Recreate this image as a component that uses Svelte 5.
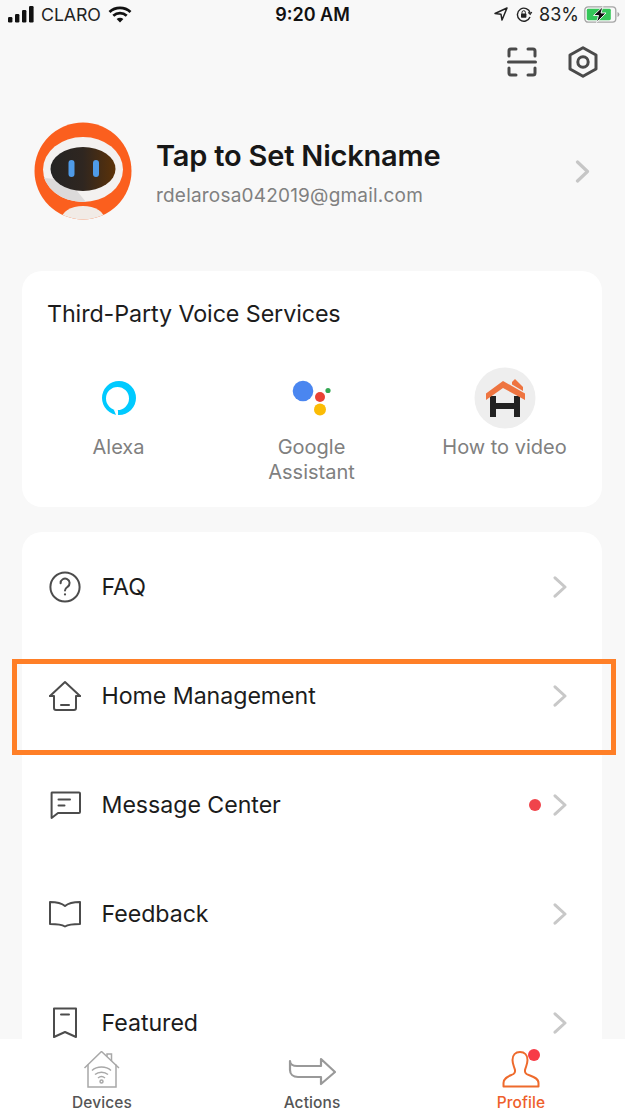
<script>
  const rows = [
    { label: 'FAQ', icon: 'faq' },
    { label: 'Home Management', icon: 'home' },
    { label: 'Message Center', icon: 'message', dot: true },
    { label: 'Feedback', icon: 'book' },
    { label: 'Featured', icon: 'bookmark' }
  ];
</script>

<div class="page">
  <main class="content">
    <div class="status">
      <div class="st-left">
        <svg width="27" height="17" viewBox="0 0 27 17" class="signal"><rect x="0" y="11" width="4.4" height="5.5" rx="1.2"/><rect x="7" y="8" width="4.4" height="8.5" rx="1.2"/><rect x="14" y="4" width="4.4" height="12.5" rx="1.2"/><rect x="21" y="0" width="4.6" height="16.5" rx="1.2"/></svg>
        <span class="carrier">CLARO</span>
        <svg width="24" height="17" viewBox="0 0 24 17" fill="none" stroke="#111" stroke-width="2.8"><path d="M1.5 6 C7.5 .6 16.5 .6 22.5 6"/><path d="M5.3 9.8 C9.2 6.3 14.8 6.3 18.7 9.8"/><path d="M12 16.6 L8.6 13 C10.6 11.4 13.4 11.4 15.4 13 Z" fill="#111" stroke="none"/></svg>
      </div>
      <span class="time">9:20 AM</span>
      <div class="st-right">
        <svg width="14" height="14" viewBox="0 0 14 14" fill="none" stroke="#222" stroke-width="1.5" stroke-linejoin="round"><path d="M13 1 L1 6.5 L7 7.3 L8 13 Z"/></svg>
        <svg class="lock" width="18" height="15" viewBox="0 0 18 15" fill="none" stroke="#222" stroke-width="1.4"><path d="M15 10 A6.5 6.5 0 1 1 15.2 6"/><path d="M16.8 5 L15.2 7.4 L13.2 5.4" stroke-width="1.2"/><rect x="6" y="6.5" width="5.4" height="4.3" rx=".7" fill="#222" stroke="none"/><path d="M7 6.8 V5.4 a1.7 1.7 0 0 1 3.4 0 V6.8" stroke-width="1"/></svg>
        <span class="pct">83%</span>
        <svg width="36" height="17" viewBox="0 0 36 17"><rect x=".8" y=".8" width="31" height="15.4" rx="3.4" fill="none" stroke="#a5a5a5" stroke-width="1.3"/><rect x="2.8" y="2.8" width="24" height="11.4" rx="1.4" fill="#35c759"/><path d="M33.5 6 a2.6 2.6 0 0 1 0 5 Z" fill="#a5a5a5"/><path d="M19 0.5 L9.5 9.5 H14.5 L12.5 16.5 L22 7 H17 Z" fill="#111" stroke="#fff" stroke-width=".9"/></svg>
      </div>
    </div>

    <div class="top-actions">
      <svg width="30" height="30" viewBox="0 0 30 30" fill="none" stroke="#4a4a4a" stroke-width="3" stroke-linecap="round" stroke-linejoin="round"><path d="M2 9 V4 a2 2 0 0 1 2-2 H9"/><path d="M21 2 H26 a2 2 0 0 1 2 2 V9"/><path d="M2 21 V26 a2 2 0 0 0 2 2 H9"/><path d="M21 28 H26 a2 2 0 0 0 2-2 V21"/><path d="M1.5 15 H28.5"/></svg>
      <svg width="30" height="32" viewBox="0 0 30 32" fill="none" stroke="#4a4a4a" stroke-width="3" stroke-linejoin="round"><path d="M15 1.8 L28 9 V23 L15 30.2 L2 23 V9 Z"/><circle cx="15" cy="16" r="5.2"/></svg>
    </div>

    <section class="profile">
      <svg class="avatar" width="98" height="98" viewBox="0 0 98 98">
        <defs>
          <linearGradient id="visor" x1="0" x2="1" y1="0" y2="0"><stop offset="0" stop-color="#242424"/><stop offset=".5" stop-color="#2f2620"/><stop offset="1" stop-color="#5c3208"/></linearGradient>
          <clipPath id="round"><circle cx="49" cy="49" r="48.5"/></clipPath>
        </defs>
        <circle cx="49" cy="49" r="48.5" fill="#fb5f1e"/>
        <g clip-path="url(#round)">
          <ellipse cx="49" cy="47.5" rx="40" ry="32.5" fill="#f3f1f0"/>
          <path d="M10 56 C18 74 34 80 52 80 L34 58 Z" fill="#dcdada"/>
          <ellipse cx="49" cy="98" rx="22" ry="14" fill="#f1ebe6"/>
          <ellipse cx="49" cy="47" rx="32.5" ry="22" fill="url(#visor)"/>
          <rect x="34.5" y="38" width="6" height="17" rx="3" fill="#4f9be8"/>
          <rect x="59" y="38" width="6" height="17" rx="3" fill="#4f9be8"/>
        </g>
      </svg>
      <div class="who">
        <h1>Tap to Set Nickname</h1>
        <p>rdelarosa042019@gmail.com</p>
      </div>
      <svg class="chev big" width="15" height="23" viewBox="0 0 15 23" fill="none" stroke="#c6c6c6" stroke-width="3.2" stroke-linecap="round" stroke-linejoin="round"><path d="M2.5 2 L12.5 11.5 L2.5 21"/></svg>
    </section>

    <section class="card voice">
      <h2>Third-Party Voice Services</h2>
      <div class="services">
        <div class="svc">
          <div class="svc-icon">
            <svg width="36" height="38" viewBox="0 0 36 38"><path fill="#00caff" fill-rule="evenodd" d="M18 2 A17 17 0 1 1 18 36 A17 17 0 1 1 18 2 Z M16.5 8 A11.5 11.5 0 1 0 16.5 31 A11.5 11.5 0 1 0 16.5 8 Z"/><path d="M12.5 30 L17 31.2 L17 37 L15.5 37 Z" fill="#fff"/></svg>
          </div>
          <span>Alexa</span>
        </div>
        <div class="svc">
          <div class="svc-icon">
            <svg width="40" height="36" viewBox="0 0 40 36"><circle cx="11" cy="11" r="10.3" fill="#4a86f0"/><circle cx="28" cy="17" r="5" fill="#e94235"/><circle cx="28" cy="29.5" r="6" fill="#fbbc05"/><circle cx="36" cy="10.5" r="2.6" fill="#34a853"/></svg>
          </div>
          <span>Google<br />Assistant</span>
        </div>
        <div class="svc">
          <div class="svc-icon">
            <svg width="62" height="62" viewBox="0 0 62 62"><circle cx="31" cy="31" r="30.5" fill="#eeeeee"/><path d="M16 29 H22 V36 H40 V29 H46 V50 H40 V42 H22 V50 H16 Z" fill="#222"/><path d="M38 15 L41 12 L49 20 L49 24 L38 17.5 Z" fill="#ee7440"/><path d="M12 26.5 L29 14 L51 26.5 L51 33 L29 21 L12 33 Z" fill="#ee7440"/></svg>
          </div>
          <span>How to video</span>
        </div>
      </div>
    </section>

    <section class="card list">
      {#each rows as row}
        <div class="row">
          <span class="row-icon">
            <svg width="34" height="34" viewBox="0 0 34 34" fill="none" stroke="#4c4c4c" stroke-width="2" stroke-linecap="round" stroke-linejoin="round">
              {#if row.icon === 'faq'}
                <circle cx="17" cy="17" r="14.6"/>
                <path d="M12.6 13.2 a4.5 4.5 0 1 1 7 3.6 c-1.7 1.2-2.6 2-2.6 3.8"/>
                <circle cx="17" cy="24.4" r="1.1" fill="#4c4c4c" stroke="none"/>
              {:else if row.icon === 'home'}
                <path d="M2 17 L17 3 L32 17"/>
                <path d="M2 17 H6 V29 a2 2 0 0 0 2 2 H26 a2 2 0 0 0 2-2 V17 H32"/>
                <path d="M13 26 H21"/>
              {:else if row.icon === 'message'}
                <path d="M4 4.5 H31 a1 1 0 0 1 1 1 V24 a1 1 0 0 1-1 1 H10 L3.6 30 V5 a.5 .5 0 0 1 .4-.5 Z"/>
                <path d="M10.5 11.5 H22"/>
                <path d="M10.5 17.5 H16.5"/>
              {:else if row.icon === 'book'}
                <path d="M2 5 C7 5 13 5.6 17 9 C21 5.6 27 5 32 5 V27 C27 27 21 27 17 29.5 C13 27 7 27 2 27 Z"/>
              {:else}
                <path d="M6 2.5 H28 V31 L17 26 L6 31 Z"/>
                <path d="M13 8.5 H21"/>
              {/if}
            </svg>
          </span>
          <span class="row-label">{row.label}</span>
          {#if row.dot}<span class="dot"></span>{/if}
          <svg class="chev" width="14" height="22" viewBox="0 0 14 22" fill="none" stroke="#c8c8c8" stroke-width="3" stroke-linecap="round" stroke-linejoin="round"><path d="M2 1.8 L12 11 L2 20.2"/></svg>
        </div>
      {/each}
    </section>

    <div class="highlight"></div>
  </main>

  <nav class="tabs">
    <div class="tab">
      <svg width="38" height="37" viewBox="0 0 38 37" fill="none" stroke="#a8a8a8" stroke-width="1.5"><path d="M1.5 17 L18.5 .5 L36 17"/><path d="M5 13.5 V36 H33 V13.5"/><path d="M24 5.5 V3 H28.5 V10"/><path d="M9 19.5 C14 14.8 23 14.8 28 19.5"/><path d="M12 23.5 C15.5 20.4 21.5 20.4 25 23.5"/><path d="M15 27 C17 25.4 20 25.4 22 27"/><circle cx="18.5" cy="30.5" r="1.5"/></svg>
      <span>Devices</span>
    </div>
    <div class="tab">
      <svg class="arrow" width="48" height="37" viewBox="0 0 48 37" fill="none" stroke="#999" stroke-width="2.2" stroke-linejoin="round" stroke-linecap="round"><path d="M2 10 C2 13 5 15 9 15 H33 V8 L47 21 L33 33 V26 H10 C5 26 2 23 2 19 Z"/></svg>
      <span>Actions</span>
    </div>
    <div class="tab active">
      <span class="tab-ico">
        <svg width="38" height="37" viewBox="0 0 38 37" fill="none" stroke="#ee6a2c" stroke-width="2" stroke-linejoin="round"><path d="M1.5 35.5 V32 C1.5 26 8 25 11.5 23 C14.5 21 13 19 12 16 C11 13 10.5 11 10.5 9 C10.5 4 13.5 1 18 1 C22.5 1 25.5 4 25.5 9 C25.5 11 25 13 24 16 C23 19 21.5 21 24.5 23 C28 25 36.5 26 36.5 32 V35.5 Z"/></svg>
        <span class="badge"></span>
      </span>
      <span>Profile</span>
    </div>
  </nav>
</div>

<style>
  :global(body) { margin: 0; background: #fff; }
  .page {
    width: 625px;
    height: 1113px;
    display: flex;
    flex-direction: column;
    overflow: hidden;
    background: #f8f8f8;
    font-family: Inter, "Liberation Sans", sans-serif;
    color: #1a1a1a;
  }
  .content { position: relative; flex: 1; min-height: 0; overflow: hidden; }

  .status {
    height: 28px;
    display: grid;
    grid-template-columns: 1fr auto 1fr;
    align-items: center;
    padding: 0 8px;
    font-size: 18px;
    color: #222;
  }
  .st-left, .st-right { display: flex; align-items: center; }
  .st-left { gap: 7px; }
  .st-right { justify-content: flex-end; margin-right: -3px; }
  .signal { fill: #111; }
  .carrier { font-weight: 400; font-size: 17.8px; letter-spacing: -.1px; color: #222; margin-left: -1px; }
  .time { font-weight: 600; font-size: 18px; color: #111; }
  .lock { margin: 0 6px 0 7px; }
  .pct { margin-right: 5px; font-size: 18px; }

  .top-actions {
    display: flex;
    justify-content: flex-end;
    align-items: center;
    gap: 31px;
    height: 34px;
    margin-top: 17px;
    padding-right: 27px;
  }

  .profile {
    display: flex;
    align-items: center;
    height: 98px;
    margin-top: 43px;
    padding: 0 35px 0 34px;
  }
  .who { flex: 1; margin-left: 24px; margin-top: 4px; }
  h1 { margin: 0; font-size: 29px; font-weight: 600; line-height: 34px; letter-spacing: -.2px; color: #171717; }
  .who p { margin: 12px 0 0; font-size: 19px; line-height: 22px; color: #808080; letter-spacing: .2px; }

  .card { background: #fff; margin: 0 23px 0 22px; border-radius: 20px; }
  .voice { height: 236px; margin-top: 51px; padding: 28px 25px 0; box-sizing: border-box; }
  h2 { margin: 0; font-size: 23.3px; font-weight: 400; line-height: 30px; color: #1c1c1c; letter-spacing: -.1px; }
  .services {
    display: grid;
    grid-template-columns: repeat(3, 193px);
    margin: 38px 0 0 -25px;
  }
  .svc {
    display: flex;
    flex-direction: column;
    align-items: center;
    text-align: center;
    font-size: 20px;
    line-height: 25px;
    color: #808080;
  }
  .svc-icon { height: 62px; display: flex; align-items: center; justify-content: center; margin-bottom: 6px; }

  .list { margin-top: 25px; height: 620px; }
  .row { height: 109.2px; display: flex; align-items: center; padding: 0 35px 0 26px; box-sizing: border-box; }
  .row-icon { width: 34px; height: 34px; margin-right: 20px; flex: none; }
  .row-icon svg { display: block; }
  .row-label { flex: 1; font-size: 23.2px; letter-spacing: -.05px; color: #1c1c1c; margin-left: -.5px; }
  .dot { width: 12px; height: 12px; border-radius: 50%; background: #f0444b; margin-right: 12px; }
  .chev { flex: none; }

  .highlight {
    position: absolute;
    left: 12px;
    top: 659px;
    width: 594px;
    height: 86px;
    border: 5px solid #ff7f27;
    pointer-events: none;
  }

  .tabs {
    flex: none;
    height: 74px;
    background: #fff;
    display: grid;
    grid-template-columns: 204px 216px 202px;
  }
  .tab {
    display: flex;
    flex-direction: column;
    align-items: center;
    font-size: 15.5px;
    font-weight: 500;
    color: #555;
    padding-top: 12px;
    box-sizing: border-box;
  }
  .tab svg { display: block; height: 37px; }
  .tab > span:last-child { margin-top: 5px; line-height: 18px; letter-spacing: .1px; padding-top: 1px; }
  .tab.active { color: #ee5f2c; }
  .tab-ico { position: relative; display: block; height: 37px; }
  .badge { position: absolute; right: 0; top: -2px; width: 12px; height: 12px; border-radius: 50%; background: #f73b47; }
</style>
